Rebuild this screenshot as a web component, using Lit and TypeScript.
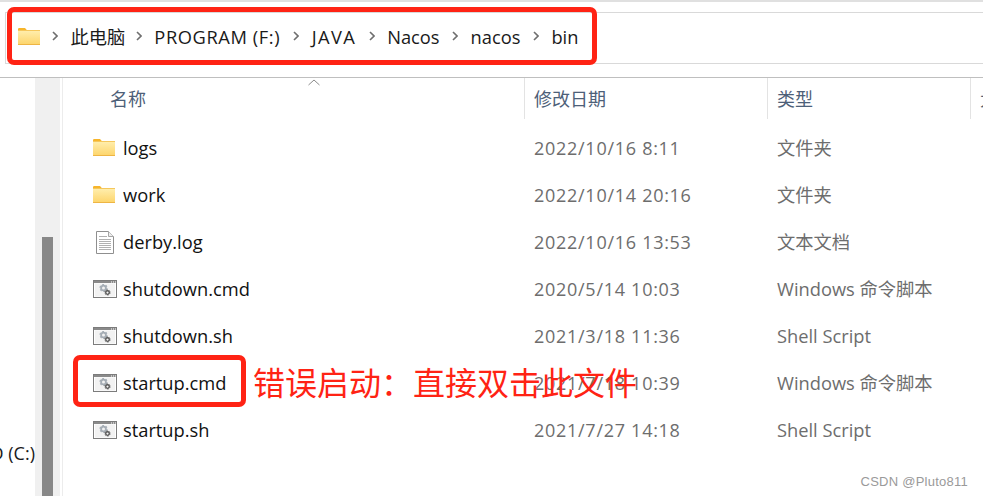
import { LitElement, html, css, svg } from "lit";
import { customElement } from "lit/decorators.js";

const folder = svg`<svg class="ico folder" viewBox="0 0 22 17" width="22" height="17">
  <defs><linearGradient id="fg" x1="0" y1="0" x2="0" y2="1"><stop offset="0" stop-color="#ffefb0"/><stop offset="1" stop-color="#fdd469"/></linearGradient></defs>
  <path d="M0 1.2Q0 0 1.2 0H7l2 2.2H0z" fill="#f7b52a"/>
  <rect x="0" y="2" width="22" height="15" fill="url(#fg)"/>
  <rect x="0" y="16" width="22" height="1" fill="#eeb544"/>
  <rect x="0" y="2" width="22" height="1" fill="#f5c75c"/>
</svg>`;

const doc = svg`<svg class="ico" viewBox="0 0 24 24" width="24" height="24">
  <path d="M3.5 1.5H15.5L20.5 6.5V23.5H3.5z" fill="#fff" stroke="#8f8f8f"/>
  <path d="M15.5 1.5V6.5H20.5" fill="#eee" stroke="#a5a5a5"/>
  <path d="M6 6.5H14M6 9.5H18M6 11.5H18M6 13.5H18M6 15.5H18M6 17.5H18M6 19.5H18" stroke="#b0b0b0" fill="none"/>
</svg>`;

const gear = (cx: number, cy: number, r: number, c: string) => svg`
  <circle cx=${cx} cy=${cy} r=${r} fill="none" stroke=${c} stroke-width=${r * 0.75}/>
  <circle cx=${cx} cy=${cy} r=${r * 1.45} fill="none" stroke=${c} stroke-width=${r * 0.5} stroke-dasharray=${`${r * 0.8} ${r * 0.72}`}/>`;

const script = svg`<svg class="ico" viewBox="0 0 24 18" width="24" height="18">
  <rect x="0.5" y="0.5" width="23" height="17" fill="#fff" stroke="#7c7c7c"/>
  <rect x="1" y="1" width="22" height="2" fill="#8a8a8a"/>
  <path d="M18 2H19M20 2H21M22 2H23" stroke="#fff"/>
  <rect x="2" y="3.5" width="20" height="13" fill="#f2f2f2"/>
  ${gear(10.5, 8, 2.4, "#a5adb5")}
  ${gear(14.5, 12.5, 1.8, "#555")}
</svg>`;

const chevron = svg`<svg class="chev" viewBox="0 0 6 10" width="6" height="10"><path d="M1 1L5 5L1 9" fill="none" stroke="#6f6f6f" stroke-width="1.6"/></svg>`;

const rows = [
  { n: "logs", d: "2022/10/16 8:11", t: "文件夹", i: folder, c: true },
  { n: "work", d: "2022/10/14 20:16", t: "文件夹", i: folder, c: true },
  { n: "derby.log", d: "2022/10/16 13:53", t: "文本文档", i: doc, c: true },
  { n: "shutdown.cmd", d: "2020/5/14 10:03", t: "Windows 命令脚本", i: script, c: true },
  { n: "shutdown.sh", d: "2021/3/18 11:36", t: "Shell Script", i: script, c: false },
  { n: "startup.cmd", d: "2021/7/18 10:39", t: "Windows 命令脚本", i: script, c: true },
  { n: "startup.sh", d: "2021/7/27 14:18", t: "Shell Script", i: script, c: false },
];
const crumbs = ["此电脑", "PROGRAM (F:)", "JAVA", "Nacos", "nacos", "bin"];

@customElement("app-root")
export class AppRoot extends LitElement {
  static styles = css`
    :host {
      display: block;
      position: relative;
      width: 983px;
      height: 496px;
      overflow: hidden;
      background: #fff;
      font-family: "Open Sans", "Noto Sans CJK SC", sans-serif;
      color: #111;
    }
    .top { height: 2px; background: #e0e0e0; }
    .addr {
      margin: 10px 0 0 5px;
      padding: 0 0 4px 12px;
      border: 1px solid #d9d9d9;
      border-right: 0;
      display: flex;
      align-items: center;
      font-size: 18.3px;
      font-kerning: none;
      box-sizing: border-box;
      height: 52px;
      color: #1a1a1a;
    }
    .addr .folder { margin-right: 12px; }
    .crumbs { display: flex; align-items: center; gap: 12.5px; }
    .crumb { white-space: nowrap; }
    .c0 { margin-right: -2px; }
    .c1 { letter-spacing: 0.58px; }
    .c2 { margin-left: 0.5px; letter-spacing: 1.4px; }
    .body {
      margin-top: 13px;
      border-top: 1px solid #bfbfbf;
      display: grid;
      grid-template-columns: 63px 1fr;
      height: 418px;
    }
    .side { display: grid; grid-template-columns: 35px 25px 3px; }
    .tree {
      overflow: hidden;
      display: flex;
      justify-content: flex-end;
      align-items: flex-end;
      padding-bottom: 31px;
      font-size: 18px;
      white-space: nowrap;
      color: #1a1a1a;
    }
    .track {
      background: #f0f0f0;
      display: flex;
      justify-content: center;
      padding-top: 159px;
    }
    .thumb { width: 11px; background: #888; }
    .edge { background: linear-gradient(90deg, #fff 66%, #ececec 66%); }
    .list { display: flex; flex-direction: column; min-width: 0; }
    .head, .row { display: grid; grid-template-columns: 462px 243px 203px 1fr; }
    .head { height: 41px; position: relative; color: #4d6078; font-size: 18px; }
    .hc {
      display: flex;
      align-items: center;
      padding: 0 0 2px 9px;
      border-right: 1px solid #e3e3e3;
      overflow: hidden;
      white-space: nowrap;
    }
    .hc.name { padding-left: 47px; }
    .hc.last { border-right: 0; }
    .sort { position: absolute; left: 245px; top: 1px; }
    .rows { padding-top: 5px; display: flex; flex-direction: column; }
    .row { height: 47px; align-items: center; font-size: 18.3px; }
    .nm { display: flex; align-items: center; color: #111; padding-left: 30px; white-space: nowrap; }
    .iw { width: 30px; display: flex; }
    .dt, .ty { color: #6d6d6d; padding-left: 9px; white-space: nowrap; }
    .ty.cjk { padding-bottom: 2px; }
    .dt { font-size: 18px; letter-spacing: 0.72px; }
    .mark {
      position: absolute;
      box-sizing: border-box;
      border: 5.5px solid #ff2314;
      border-radius: 7px;
      pointer-events: none;
    }
    .m1 { left: 7px; top: 7px; width: 590px; height: 58px; }
    .m2 { left: 73px; top: 355px; width: 173px; height: 52px; }
    .note {
      position: absolute;
      left: 253px;
      top: 358px;
      font-size: 32px;
      line-height: 46px;
      color: #ff2314;
      white-space: nowrap;
      font-family: "Noto Sans CJK SC", sans-serif;
    }
    .wm {
      position: absolute;
      right: 15px;
      bottom: 7px;
      font: 13px "Liberation Sans", sans-serif;
      color: #9a9a9a;
      letter-spacing: 0.25px;
    }
  `;

  render() {
    return html`
      <div class="top"></div>
      <div class="addr">
        ${folder}
        <div class="crumbs">
          ${crumbs.map((c, i) => html`${chevron}<span class="crumb c${i}">${c}</span>`)}
        </div>
      </div>
      <div class="body">
        <div class="side">
          <div class="tree"><span>D (C:)</span></div>
          <div class="track"><div class="thumb"></div></div>
          <div class="edge"></div>
        </div>
        <div class="list">
          <div class="head">
            <div class="hc name">名称</div>
            <div class="hc">修改日期</div>
            <div class="hc">类型</div>
            <div class="hc last">大小</div>
            <svg class="sort" viewBox="0 0 12 7" width="12" height="7"><path d="M0.5 6L6 1L11.5 6" fill="none" stroke="#8a8a8a"/></svg>
          </div>
          <div class="rows">
            ${rows.map(
              (r) => html`<div class="row">
                <div class="nm"><span class="iw">${r.i}</span>${r.n}</div>
                <div class="dt">${r.d}</div>
                <div class="ty ${r.c ? "cjk" : ""}">${r.t}</div>
                <div></div>
              </div>`
            )}
          </div>
        </div>
      </div>
      <div class="mark m1"></div>
      <div class="mark m2"></div>
      <div class="note">错误启动\uFF1A直接双击此文件</div>
      <div class="wm">CSDN @Pluto811</div>
    `;
  }
}
